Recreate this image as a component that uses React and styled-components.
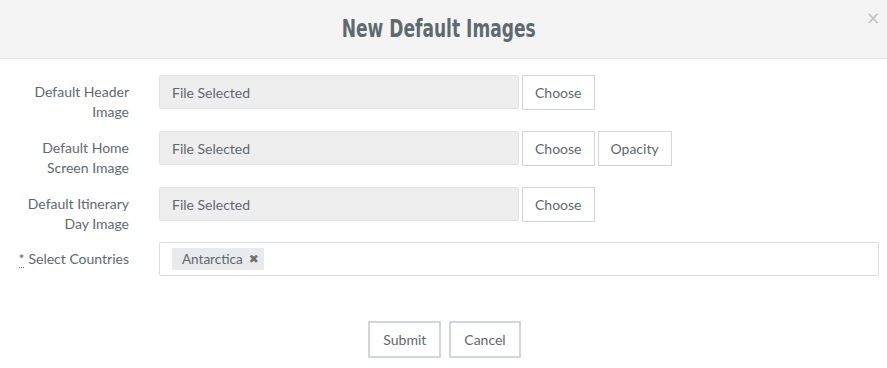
import React from "react";
import styled, { createGlobalStyle } from "styled-components";

const Global = createGlobalStyle`
  html, body { margin: 0; padding: 0; background: #fff; }
  body { font-family: Lato, "Open Sans", sans-serif; font-size: 14px; color: #5e6870; }
  * { box-sizing: border-box; }
`;

const Modal = styled.div`
  width: 887px;
  background: #fff;
  display: flex;
  flex-direction: column;
`;

const Header = styled.div`
  position: relative;
  flex-shrink: 0;
  height: 59px;
  padding-right: 10px;
  background: #f4f4f4;
  border-bottom: 1px solid #e4e4e4;
  display: flex;
  align-items: center;
  justify-content: center;
`;

const Title = styled.h4`
  margin: 0;
  font-family: "DejaVu Sans Condensed", "Liberation Sans", sans-serif;
  font-weight: 700;
  font-size: 24px;
  line-height: 30px;
  color: #5f6a70;
  transform: scaleX(0.79);
`;

const Close = styled.button`
  position: absolute;
  top: 8px;
  right: 6px;
  border: 0;
  background: transparent;
  padding: 0;
  width: 16px;
  height: 20px;
  color: #c2c2c2;
  font-family: "DejaVu Sans", sans-serif;
  font-size: 17px;
  line-height: 20px;
`;

const Body = styled.div`
  padding: 16px 8px 0 0;
  display: flex;
  flex-direction: column;
  gap: 9px;
`;

const Row = styled.div`
  display: grid;
  grid-template-columns: 129px 1fr;
  column-gap: 30px;
  align-items: start;
  margin-top: ${(p) => (p.$tight ? "-1px" : "0")};
`;

const Label = styled.label`
  text-align: right;
  padding-top: 7px;
  line-height: 20px;
  font-size: 14px;
  color: #5e6870;
`;

const Req = styled.abbr`
  text-decoration: none;
  border-bottom: 1px dotted #777;
  margin-right: 4px;
`;

const Controls = styled.div`
  display: flex;
  gap: 3px;
`;

const FileInput = styled.div`
  width: 360px;
  height: 34px;
  background: #eeeeee;
  border: 1px solid #e0e0e0;
  border-radius: 3px;
  padding: 0 12px;
  display: flex;
  align-items: center;
  font-size: 14px;
  color: #5e6870;
`;

const Btn = styled.button`
  height: ${(p) => (p.$big ? "37px" : "35px")};
  padding: 0 ${(p) => (p.$big ? "13px" : "12px")};
  background: #fff;
  border: ${(p) => (p.$big ? "2px" : "1px")} solid #d2d6da;
  border-radius: 0;
  font-family: Lato, sans-serif;
  font-size: 14px;
  color: #5e6870;
  cursor: pointer;
`;

const Select = styled.div`
  height: 34px;
  border: 1px solid #dcdcdc;
  border-radius: 2px;
  padding: 0 12px;
  display: flex;
  align-items: center;
`;

const Tag = styled.span`
  display: inline-flex;
  align-items: center;
  gap: 6px;
  height: 22px;
  padding: 0 5px 0 10px;
  background: #e9eaeb;
  font-size: 13.5px;
  color: #5e6870;
`;

const TagX = styled.span`
  font-family: "DejaVu Sans", sans-serif;
  font-size: 12px;
  color: #6f6f6f;
  font-weight: 700;
`;

const Footer = styled.div`
  margin-top: 45px;
  padding-left: 2px;
  display: flex;
  justify-content: center;
  gap: 8px;
`;

export default function App() {
  return (
    <>
      <Global />
      <Modal>
        <Header>
          <Title>New Default Images</Title>
          <Close aria-label="close">×</Close>
        </Header>
        <Body>
          <Row>
            <Label>Default Header<br />Image</Label>
            <Controls>
              <FileInput>File Selected</FileInput>
              <Btn>Choose</Btn>
            </Controls>
          </Row>
          <Row>
            <Label>Default Home<br />Screen Image</Label>
            <Controls>
              <FileInput>File Selected</FileInput>
              <Btn>Choose</Btn>
              <Btn>Opacity</Btn>
            </Controls>
          </Row>
          <Row>
            <Label>Default Itinerary<br />Day Image</Label>
            <Controls>
              <FileInput>File Selected</FileInput>
              <Btn>Choose</Btn>
            </Controls>
          </Row>
          <Row $tight>
            <Label><Req title="required">*</Req>Select Countries</Label>
            <Select>
              <Tag>Antarctica<TagX>✖</TagX></Tag>
            </Select>
          </Row>
        </Body>
        <Footer>
          <Btn $big>Submit</Btn>
          <Btn $big>Cancel</Btn>
        </Footer>
      </Modal>
    </>
  );
}
